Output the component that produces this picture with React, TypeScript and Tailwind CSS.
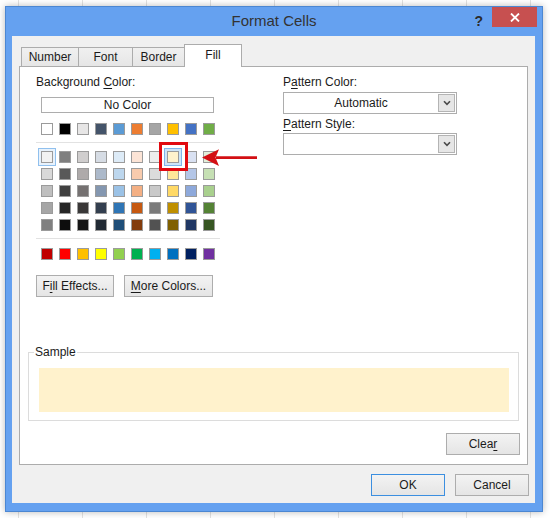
import React from "react";

const themeRow = ["#ffffff", "#000000", "#e7e6e6", "#44546a", "#5b9bd5", "#ed7d31", "#a5a5a5", "#ffc000", "#4472c4", "#70ad47"];

const tintRows = [
  ["#f2f2f2", "#7f7f7f", "#d0cece", "#d6dce4", "#ddebf7", "#fce4d6", "#ededed", "#fff2cc", "#d9e1f2", "#e2efda"],
  ["#d9d9d9", "#595959", "#aeaaaa", "#acb9ca", "#bdd7ee", "#f8cbad", "#dbdbdb", "#ffe699", "#b4c6e7", "#c6e0b4"],
  ["#bfbfbf", "#404040", "#757171", "#8497b0", "#9bc2e6", "#f4b084", "#c9c9c9", "#ffd966", "#8ea9db", "#a9d08e"],
  ["#a6a6a6", "#262626", "#3a3838", "#333f4f", "#2f75b5", "#c65911", "#7b7b7b", "#bf8f00", "#305496", "#548235"],
  ["#808080", "#0d0d0d", "#161616", "#222b35", "#1f4e78", "#833c0c", "#525252", "#806000", "#203764", "#375623"],
];

const standardRow = ["#c00000", "#ff0000", "#ffc000", "#ffff00", "#92d050", "#00b050", "#00b0f0", "#0070c0", "#002060", "#7030a0"];

const Swatch = ({ color }: { color: string }) => (
  <div className="w-[12px] h-[12px] border border-[#9b9b9b]" style={{ background: color }} />
);

const Btn = ({ children, className = "" }: { children: React.ReactNode; className?: string }) => (
  <div
    className={`h-[22px] flex items-center justify-center border border-[#adadad] bg-linear-to-b from-[#f3f3f3] to-[#e5e5e5] ${className}`}
  >
    {children}
  </div>
);

const Chevron = () => (
  <svg width="8" height="6" viewBox="0 0 8 6">
    <path d="M1 1.2 L4 4.4 L7 1.2" fill="none" stroke="#4a4a4a" strokeWidth="1.6" />
  </svg>
);

const Dropdown = ({ value }: { value: string }) => (
  <div className="w-[174px] h-[22px] flex border border-[#adadad] bg-white">
    <div className="flex-1 flex items-center justify-center">{value}</div>
    <div className="w-[17px] my-px mr-px flex items-center justify-center border border-[#b4b4b4] bg-[#e6e6e6]">
      <Chevron />
    </div>
  </div>
);

const u = (ch: string) => <span className="underline underline-offset-[2px]">{ch}</span>;

export default function App() {
  return (
    <div className="w-[550px] h-[518px] overflow-hidden bg-white bg-[linear-gradient(90deg,#e2e2e2_1px,transparent_1px)] [background-size:64px_100%] [background-position:18px_0] pt-[6px] pl-[5px] font-['Liberation_Sans',Arial,sans-serif] text-[12px] text-[#1b1b1b]">
      <div className="w-[538px] h-[506px] flex flex-col border border-[#4c87d2] bg-[#65a1f0] pl-[6px] pr-[7px] pb-[8px] shadow-[0_0_7px_rgba(0,0,0,0.28)]">
        {/* title bar */}
        <div className="h-[29px] -ml-[6px] -mr-[7px] grid grid-cols-[1fr_auto_1fr]">
          <div />
          <div className="flex items-center text-[15px] text-[#333]">Format Cells</div>
          <div className="flex justify-end items-start">
            <span className="mt-[4px] mr-[9px] text-[14px] font-bold text-[#2b2b2b]">?</span>
            <div className="w-[45px] h-[20px] mr-[5px] bg-[#c75050] flex items-center justify-center">
              <svg width="10" height="9" viewBox="0 0 10 9">
                <path d="M1 0.5 L9 8.5 M9 0.5 L1 8.5" stroke="#fff" strokeWidth="1.8" />
              </svg>
            </div>
          </div>
        </div>

        {/* client area */}
        <div className="flex-1 flex flex-col bg-[#f0f0f0] pt-[8px]">
          {/* tabs */}
          <div className="h-[22px] ml-[9px] flex items-end">
            <div className="w-[58px] h-[19px] flex items-center justify-center border border-b-0 border-[#acacac] bg-linear-to-b from-[#f0f0f0] to-[#e6e6e6]">
              Number
            </div>
            <div className="w-[55px] h-[19px] -ml-px flex items-center justify-center border border-b-0 border-[#acacac] bg-linear-to-b from-[#f0f0f0] to-[#e6e6e6]">
              Font
            </div>
            <div className="w-[53px] h-[19px] -ml-px flex items-center justify-center border border-b-0 border-[#acacac] bg-linear-to-b from-[#f0f0f0] to-[#e6e6e6]">
              Border
            </div>
            <div className="relative z-10 w-[58px] h-[23px] -ml-px -mb-px flex items-center justify-center pb-[2px] border border-b-0 border-[#acacac] bg-white">
              Fill
            </div>
          </div>

          {/* panel */}
          <div className="ml-[7px] w-[509px] h-[399px] flex flex-col border border-[#acacac] bg-white pt-[7px]">
            <div className="flex pl-[16px]">
              {/* left column */}
              <div className="w-[184px] flex flex-col">
                <div className="h-[16px] leading-[16px]">Background {u("C")}olor:</div>
                <div className="mt-[7px] ml-[5px] w-[173px] h-[16px] flex items-center justify-center border border-[#adadad] bg-white">
                  No Color
                </div>
                <div className="mt-[10px] ml-[5px] grid grid-cols-[repeat(10,12px)] gap-x-[6px]">
                  {themeRow.map((c) => (
                    <Swatch key={c} color={c} />
                  ))}
                </div>
                <div className="mt-[7px] h-px w-[184px] bg-[#e2e2e2]" />
                <div className="mt-[8px] ml-[5px] grid grid-cols-[repeat(10,12px)] gap-x-[6px] gap-y-[5px]">
                  {tintRows.map((row, r) =>
                    row.map((c, i) => {
                      if (r === 0 && i === 0) {
                        return (
                          <div key={`${r}-${i}`} className="relative">
                            <div className="-m-[3px] w-[18px] h-[18px] flex items-center justify-center border border-[#90c0ee] bg-[#e8f2fc]">
                              <Swatch color={c} />
                            </div>
                          </div>
                        );
                      }
                      if (r === 0 && i === 7) {
                        return (
                          <div key={`${r}-${i}`} className="relative z-10">
                            <div className="-m-[3px] w-[18px] h-[18px] flex items-center justify-center border border-[#7fb4ea] bg-[#cde4f8]">
                              <Swatch color={c} />
                            </div>
                            <div className="absolute left-[-8px] top-[-9px] w-[29px] h-[29px] border-[3px] border-[#e10a10]" />
                            <svg
                              className="absolute left-[35px] top-[-3px]"
                              width="56"
                              height="19"
                              viewBox="0 0 56 19"
                            >
                              <path d="M14 8.2 H55 V11 H14 Z" fill="#d30f14" />
                              <path d="M0 9.6 L17 1.2 L13.5 9.6 L17 18 Z" fill="#d30f14" />
                            </svg>
                          </div>
                        );
                      }
                      return <Swatch key={`${r}-${i}`} color={c} />;
                    })
                  )}
                </div>
                <div className="mt-[7px] h-px w-[184px] bg-[#e2e2e2]" />
                <div className="mt-[9px] ml-[5px] grid grid-cols-[repeat(10,12px)] gap-x-[6px]">
                  {standardRow.map((c) => (
                    <Swatch key={c} color={c} />
                  ))}
                </div>
                <div className="mt-[15px] flex gap-[10px]">
                  <Btn className="w-[78px]">F{u("i")}ll Effects...</Btn>
                  <Btn className="w-[89px]">{u("M")}ore Colors...</Btn>
                </div>
              </div>

              {/* right column */}
              <div className="ml-[63px] flex flex-col">
                <div className="h-[16px] leading-[16px]">P{u("a")}ttern Color:</div>
                <div className="mt-[2px]">
                  <Dropdown value="Automatic" />
                </div>
                <div className="mt-[2px] h-[16px] leading-[16px]">{u("P")}attern Style:</div>
                <div className="mt-px">
                  <Dropdown value="" />
                </div>
              </div>
            </div>

            {/* sample */}
            <div className="relative mt-[55px] ml-[8px] w-[491px] h-[69px] border border-[#dcdcdc] pt-[15px] pl-[10px]">
              <span className="absolute left-[5px] top-[-8px] px-px bg-white leading-[14px]">Sample</span>
              <div className="w-[470px] h-[44px] bg-[#fff2cc]" />
            </div>

            <div className="mt-[12px] mr-[7px] self-end">
              <Btn className="w-[74px]">
                Clea{u("r")}
              </Btn>
            </div>
          </div>

          {/* dialog buttons */}
          <div className="mt-[9px] mr-[6px] flex justify-end gap-[10px]">
            <div className="w-[74px] h-[22px] flex items-center justify-center border border-[#3c8fe0] bg-linear-to-b from-[#f3f3f3] to-[#e5e5e5]">
              OK
            </div>
            <Btn className="w-[74px]">Cancel</Btn>
          </div>
        </div>
      </div>
    </div>
  );
}
